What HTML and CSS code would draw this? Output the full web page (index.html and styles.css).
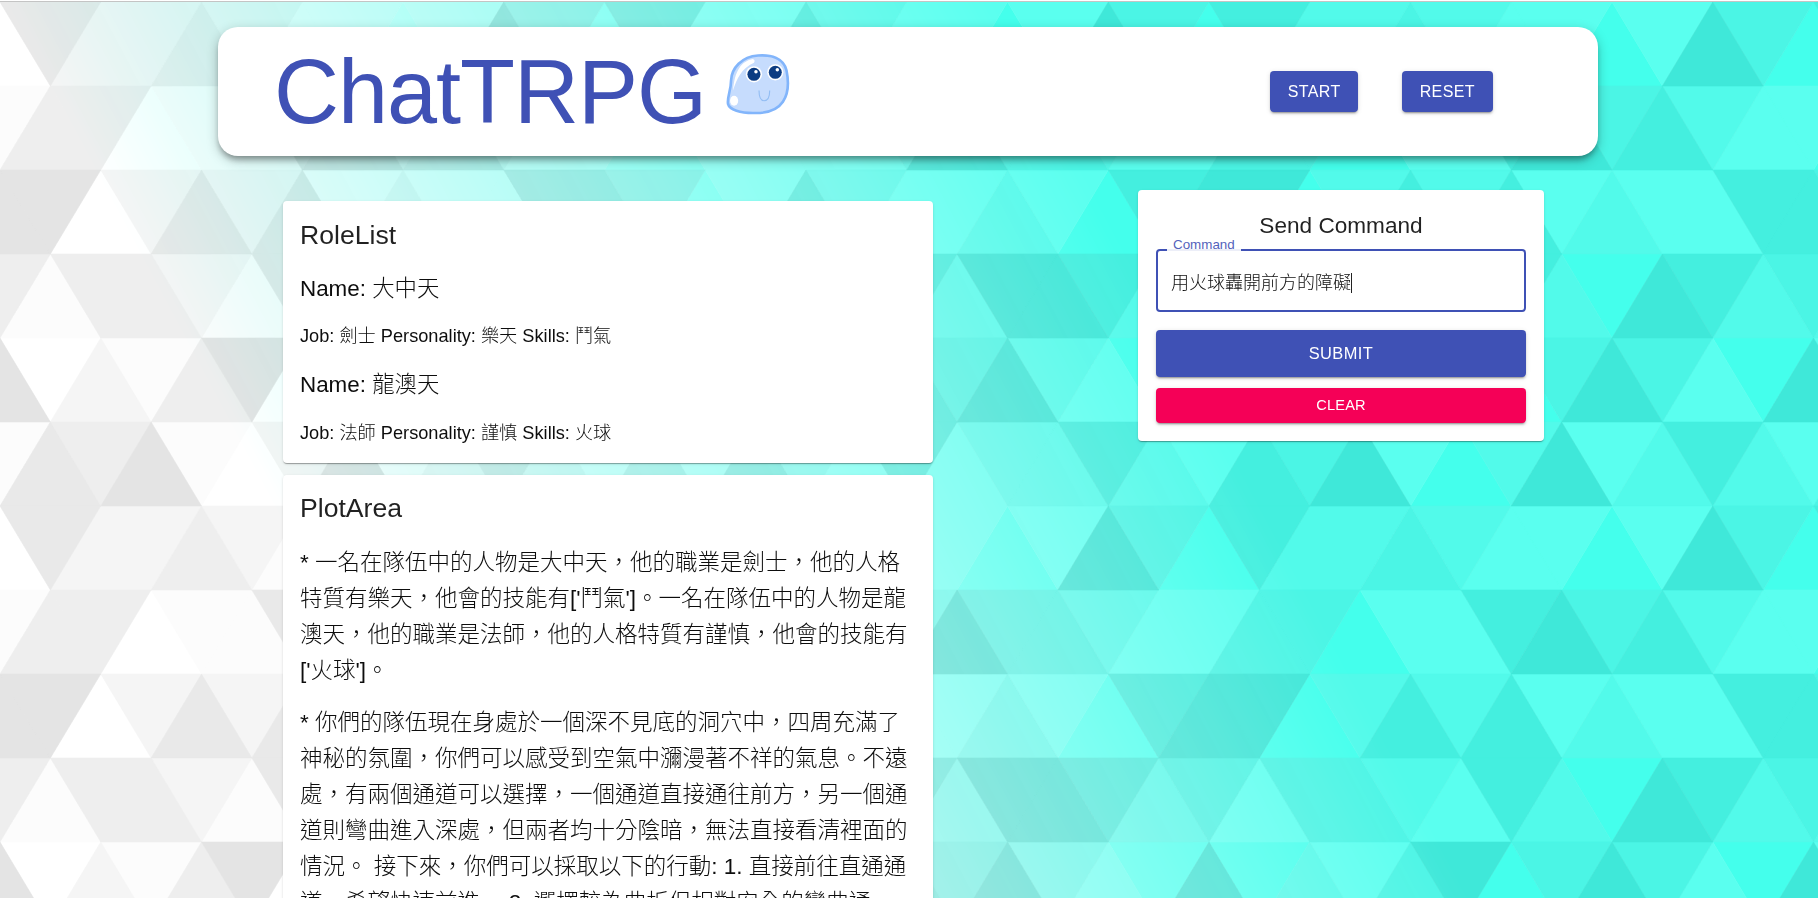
FILE: index.html
```html
<!DOCTYPE html>
<html lang="zh-Hant">
<head>
<meta charset="utf-8">
<title>ChatTRPG</title>
<link rel="stylesheet" href="styles.css">
</head>
<body>
<div class="backdrop" aria-hidden="true">
  <svg class="layer" id="layer-gray" width="1818" height="896"></svg>
  <svg class="layer layer-teal" id="layer-teal" width="1818" height="896"></svg>
</div>
<div class="topline"></div>
<div class="app">
  <header class="header">
    <h1 class="brand">ChatTRPG</h1>
    <svg class="logo" viewBox="0 0 62 60" width="64" height="61" aria-label="logo">
      <path d="M31 1.5C44 0.5 56 4 59 16C61.5 28 61.5 38 55.5 47C49.5 56 37 58.5 26 58C14 58 3 55 1.5 49C0.5 42 4.5 36 4.5 26C5 14 15 2.5 31 1.5Z" fill="#c6dcfd" stroke="#82b5fb" stroke-width="2.6"/>
      <path d="M26 5C15 7 8 16 6.5 36C10 24 15 14 27 8.5C28 7.5 28 5.5 26 5Z" fill="#fff"/>
      <ellipse cx="7.5" cy="46" rx="4" ry="5" fill="#fff"/>
      <circle cx="27" cy="20" r="8" fill="#fff"/>
      <circle cx="27" cy="20" r="6.4" fill="#0c3c82"/>
      <circle cx="29" cy="17.5" r="1.7" fill="#fff"/>
      <circle cx="48" cy="18" r="8" fill="#fff"/>
      <circle cx="48" cy="18" r="6.4" fill="#0c3c82"/>
      <circle cx="50" cy="15.5" r="1.7" fill="#fff"/>
      <path d="M32 36C32 42 33 46 37 46C41 46 42.500 42 42.500 36" fill="none" stroke="#92bdf3" stroke-width="1.1"/>
    </svg>
    <div class="header-actions">
      <button class="btn btn-head" type="button">START</button>
      <button class="btn btn-head" type="button">RESET</button>
    </div>
  </header>

  <main class="main">
    <div class="col-left">
      <section class="card role-card">
        <h2 class="card-title">RoleList</h2>
        <p class="role-name">Name: 大中天</p>
        <p class="role-info">Job: 劍士 Personality: 樂天 Skills: 鬥氣</p>
        <p class="role-name">Name: 龍澳天</p>
        <p class="role-info">Job: 法師 Personality: 謹慎 Skills: 火球</p>
      </section>
      <section class="card plot-card">
        <h2 class="card-title">PlotArea</h2>
        <p class="plot-text">* 一名在隊伍中的人物是大中天，他的職業是劍士，他的人格特質有樂天，他會的技能有['鬥氣']。一名在隊伍中的人物是龍澳天，他的職業是法師，他的人格特質有謹慎，他會的技能有['火球']。</p>
        <p class="plot-text">* 你們的隊伍現在身處於一個深不見底的洞穴中，四周充滿了神秘的氛圍，你們可以感受到空氣中瀰漫著不祥的氣息。不遠處，有兩個通道可以選擇，一個通道直接通往前方，另一個通道則彎曲進入深處，但兩者均十分陰暗，無法直接看清裡面的情況。 接下來，你們可以採取以下的行動: 1. 直接前往直通通道，希望快速前進。 2. 選擇較為曲折但相對安全的彎曲通道。</p>
      </section>
    </div>

    <aside class="card command-card">
      <h2 class="command-title">Send Command</h2>
      <div class="field">
        <span class="field-label">Command</span>
        <div class="field-value">用火球轟開前方的障礙<span class="caret"></span></div>
      </div>
      <button class="btn btn-submit" type="button">SUBMIT</button>
      <button class="btn btn-clear" type="button">CLEAR</button>
    </aside>
  </main>
</div>
<script src="script.js"></script>
</body>
</html>
```

FILE: styles.css
```css
* { box-sizing: border-box; }

html {
  height: 100%;
  overflow: hidden;
  background: #fff;
}

body {
  margin: 0;
  height: 100%;
  overflow: hidden;
  font-family: "Liberation Sans", "Noto Sans CJK TC", sans-serif;
  color: rgba(0, 0, 0, 0.87);
}

.backdrop {
  position: fixed;
  top: 2px;
  left: 0;
  width: 1818px;
  height: 896px;
  z-index: -1;
  filter: blur(0.5px);
}

.layer {
  position: absolute;
  top: 0;
  left: 0;
  display: block;
}

.layer-teal {
  -webkit-mask-image: linear-gradient(62deg, transparent 21%, #000 64%);
  mask-image: linear-gradient(62deg, transparent 21%, #000 64%);
}

.topline {
  height: 1px;
  margin-top: 1px;
  background: #c4c4c4;
}

.app {
  padding-top: 25px;
}

.header {
  display: flex;
  align-items: center;
  width: 1380px;
  height: 129px;
  margin-left: 218px;
  padding: 0 105.500px 0 56px;
  background: #fff;
  border-radius: 20px;
  box-shadow: 0 5px 6px -2px rgba(0, 0, 0, 0.35), 0 4px 12px 1px rgba(0, 0, 0, 0.2);
}

.brand {
  margin: 0;
  font-size: 90px;
  font-weight: 400;
  line-height: 1;
  letter-spacing: -1px;
  color: #3f51b5;
}

.logo {
  flex: none;
  margin: 0 0 15px 20px;
}

.header-actions {
  display: flex;
  gap: 44px;
  margin-left: auto;
}

.btn {
  display: block;
  border: 0;
  border-radius: 4px;
  color: #fff;
  font-family: inherit;
  text-transform: uppercase;
  box-shadow: 0 3px 1px -2px rgba(0, 0, 0, 0.2), 0 2px 2px 0 rgba(0, 0, 0, 0.14), 0 1px 5px 0 rgba(0, 0, 0, 0.12);
}

.btn-head {
  height: 41px;
  padding: 0 17.500px;
  background: #3f51b5;
  font-size: 16px;
  letter-spacing: 0.4px;
}

.main {
  display: flex;
  align-items: flex-start;
  gap: 205px;
  padding-left: 283px;
}

.col-left {
  display: flex;
  flex-direction: column;
  gap: 12px;
  width: 650px;
  margin-top: 45px;
}

.card {
  background: #fff;
  border-radius: 4px;
  box-shadow: 0 2px 1px -1px rgba(0, 0, 0, 0.2), 0 1px 1px 0 rgba(0, 0, 0, 0.14), 0 1px 3px 0 rgba(0, 0, 0, 0.12);
}

.role-card {
  padding: 18px 17px 17px;
}

.plot-card {
  padding: 17px 18px 17px 17px;
}

.card-title {
  margin: 0;
  font-size: 26.6px;
  font-weight: 400;
  line-height: 32px;
}

.role-name {
  margin: 20px 0 0;
  font-size: 22.4px;
  font-weight: 300;
  line-height: 32px;
  color: rgba(0, 0, 0, 0.95);
}

.card-title + .role-name {
  margin-top: 22px;
}

.role-info {
  margin: 18px 0 0;
  font-size: 18.2px;
  font-weight: 300;
  line-height: 26px;
  color: rgba(0, 0, 0, 0.95);
}

.role-name + .role-info + .role-name + .role-info {
  margin-top: 19px;
}

.plot-text {
  margin: 16px 0 0;
  font-size: 22.5px;
  font-weight: 300;
  line-height: 36px;
  color: rgba(0, 0, 0, 0.95);
}

.card-title + .plot-text {
  margin-top: 21px;
}

.command-card {
  width: 406px;
  margin-top: 34px;
  padding: 21px 18px 18px;
}

.command-title {
  margin: 0;
  font-size: 22.6px;
  font-weight: 400;
  line-height: 30px;
  text-align: center;
}

.field {
  position: relative;
  height: 63px;
  margin-top: 8px;
  padding: 0 13px;
  display: flex;
  align-items: center;
  border: 2px solid #3f51b5;
  border-radius: 4px;
}

.field-label {
  position: absolute;
  top: -14px;
  left: 9px;
  padding: 0 6px;
  background: #fff;
  color: #3f51b5;
  font-size: 13.4px;
  line-height: 16px;
  opacity: 0.9;
}

.field-value {
  display: flex;
  align-items: center;
  margin-top: 4px;
  font-size: 18px;
  font-weight: 300;
  line-height: 24px;
  color: rgba(0, 0, 0, 0.95);
}

.caret {
  display: block;
  width: 1px;
  height: 20px;
  background: #222;
}

.btn-submit {
  width: 100%;
  height: 47px;
  margin-top: 18px;
  background: #3f51b5;
  font-size: 16.4px;
  letter-spacing: 0.45px;
}

.btn-clear {
  width: 100%;
  height: 35px;
  margin-top: 11px;
  padding-bottom: 3px;
  background: #f50057;
  font-size: 14.6px;
  letter-spacing: 0.2px;
}
```

FILE: script.js
```js
(function () {
  var W = 100.75, H = 84, NS = "http://www.w3.org/2000/svg";
  var rows = [
    "042232110153041142110153",
    "133011453421101111253321",
    "550242412114430142112104",
    "313321420542323123425542",
    "502135035310513241435210",
    "143510251242131421412242"
  ];
  var gray = ["#ffffff", "#fcfcfc", "#f5f5f5", "#eeeeee", "#e9e9e9", "#e4e4e4"];
  var teal = ["#44ffec", "#5affef", "#52faea", "#4bf5e5", "#44efdf", "#3fe8d9"];
  var paths = ["", "", "", "", "", ""];

  for (var r = 0; r < 11; r++) {
    for (var i = -1; i <= 37; i++) {
      var lvl = +rows[r % 6].charAt(((i % 24) + 24) % 24);
      var cx = i * W / 2, y0 = r * H, y1 = y0 + H, h = W / 2;
      var up = ((r + i) % 2 + 2) % 2 === 0;
      paths[lvl] += up
        ? "M" + cx + " " + y0 + "L" + (cx - h) + " " + y1 + "L" + (cx + h) + " " + y1 + "Z"
        : "M" + (cx - h) + " " + y0 + "L" + (cx + h) + " " + y0 + "L" + cx + " " + y1 + "Z";
    }
  }

  function fill(id, colors) {
    var svg = document.getElementById(id);
    paths.forEach(function (d, k) {
      var p = document.createElementNS(NS, "path");
      p.setAttribute("d", d);
      p.setAttribute("fill", colors[k]);
      p.setAttribute("stroke", colors[k]);
      p.setAttribute("stroke-width", "0.6");
      svg.appendChild(p);
    });
  }

  fill("layer-gray", gray);
  fill("layer-teal", teal);
})();
```
